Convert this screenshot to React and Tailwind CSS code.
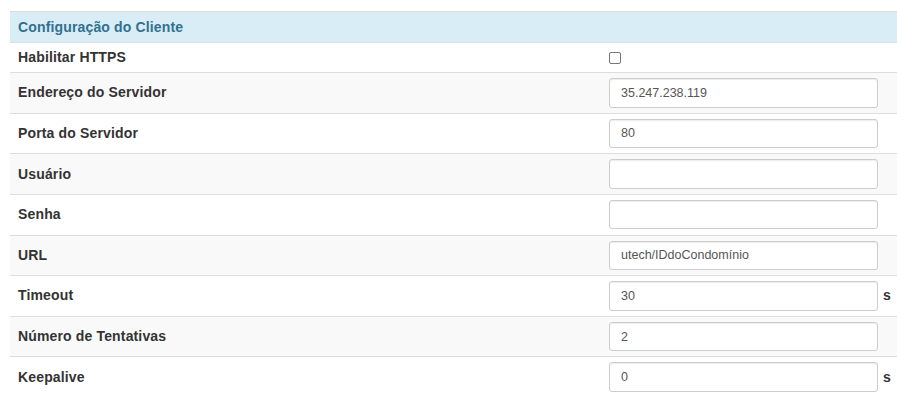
import React from "react";

const rows = [
  { label: "Endereço do Servidor", value: "35.247.238.119" },
  { label: "Porta do Servidor", value: "80" },
  { label: "Usuário", value: "" },
  { label: "Senha", value: "", type: "password" },
  { label: "URL", value: "utech/IDdoCondomínio" },
  { label: "Timeout", value: "30", unit: "s" },
  { label: "Número de Tentativas", value: "2" },
  { label: "Keepalive", value: "0", unit: "s" },
];

const App = () => {
  return (
    <div
      className="bg-white w-[897px] h-[397px] overflow-hidden pt-[11px] pl-[10px]"
      style={{ fontFamily: '"Liberation Sans", Arial, sans-serif' }}
    >
      {/* Header */}
      <div className="h-[31px] bg-[#d9edf7] border-t border-[#ddd] flex items-center px-2 text-[14px] tracking-[0.15px] font-bold text-[#31708f]">
        Configuração do Cliente
      </div>

      {/* Habilitar HTTPS */}
      <div className="h-[30px] border-t border-[#ddd] flex items-center bg-white">
        <div className="w-[591px] px-2 text-[14px] tracking-[0.15px] font-bold text-[#333]">Habilitar HTTPS</div>
        <div className="pl-[8px] flex items-center">
          <input type="checkbox" className="w-[12px] h-[12px] m-0 appearance-none border border-[#767676] rounded-[2px] bg-white" />
        </div>
      </div>

      {rows.map((row, i) => (
        <div
          key={row.label}
          className={`h-[40.625px] border-t border-[#ddd] flex items-center ${i % 2 === 0 ? "bg-[#f9f9f9]" : "bg-white"}`}
        >
          <div className="w-[591px] px-2 text-[14px] tracking-[0.15px] font-bold text-[#333]">{row.label}</div>
          <div className="pl-2 flex items-center">
            <input
              type={row.type || "text"}
              defaultValue={row.value}
              className="w-[269px] h-[29.6px] px-[11px] border border-[#ccc] rounded-[3px] bg-white text-[12.5px] text-[#555] shadow-[inset_0_1px_1px_rgba(0,0,0,0.075)] outline-none"
              style={{ fontFamily: '"Liberation Sans", Arial, sans-serif' }}
            />
            {row.unit && <span className="ml-[5px] text-[14px] font-bold text-[#333]">{row.unit}</span>}
          </div>
        </div>
      ))}
    </div>
  );
};

export default App;
